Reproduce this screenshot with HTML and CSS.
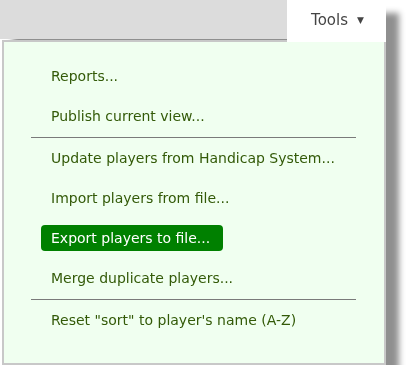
FILE: index.html
```html
<!DOCTYPE html>
<html>
<head>
<meta charset="utf-8">
<link rel="stylesheet" href="styles.css">
</head>
<body>
<div class="frame">
  <div class="top">
    <div class="bar"></div>
    <div class="tab"><span class="tab-label">Tools</span><span class="caret">&#9660;</span></div>
  </div>
  <div class="panel">
    <ul class="menu">
      <li class="item"><span class="link">Reports...</span></li>
      <li class="item"><span class="link">Publish current view...</span></li>
      <li class="sep"></li>
      <li class="item"><span class="link">Update players from Handicap System...</span></li>
      <li class="item"><span class="link">Import players from file...</span></li>
      <li class="item"><span class="link active">Export players to file...</span></li>
      <li class="item"><span class="link">Merge duplicate players...</span></li>
      <li class="sep"></li>
      <li class="item"><span class="link">Reset "sort" to player's name (A-Z)</span></li>
    </ul>
  </div>
</div>
</body>
</html>
```
FILE: styles.css
```css
html, body {
  margin: 0;
  padding: 0;
  background: #ffffff;
}
body {
  font-family: "DejaVu Sans", Verdana, sans-serif;
}
.frame {
  width: 386px;
  filter: drop-shadow(13px 13px 3px rgba(0, 0, 0, 0.44));
}
.top {
  display: flex;
  height: 40px;
}
.bar {
  flex: 1;
  height: 39px;
  background: #dcdcdc;
}
.tab {
  width: 99px;
  height: 42px;
  background: #ffffff;
  position: relative;
  z-index: 1;
  display: flex;
  align-items: center;
  justify-content: center;
  gap: 9px;
  color: #444444;
  padding: 0 0 3px 2px;
  box-sizing: border-box;
}
.tab-label {
  font-size: 15px;
}
.caret {
  font-size: 9px;
}
.panel {
  margin-left: 2px;
  width: 384px;
  height: 325px;
  box-sizing: border-box;
  border: 2px solid #c8c8c8;
  background: #f0fff0;
}
.menu {
  list-style: none;
  margin: 0;
  padding: 14px 0 0 37px;
}
.item {
  height: 40px;
  display: flex;
  align-items: center;
}
.link {
  font-size: 14px;
  line-height: 18px;
  color: #335a08;
  padding: 4px 10px;
  border-radius: 4px;
}
.link.active {
  display: inline-block;
  padding: 4px 13px 4px 10px;
  background: #008000;
  color: #ffffff;
}
.sep {
  height: 1px;
  margin: 1px 28px 0 -10px;
  background: #7a7a7a;
}
```
